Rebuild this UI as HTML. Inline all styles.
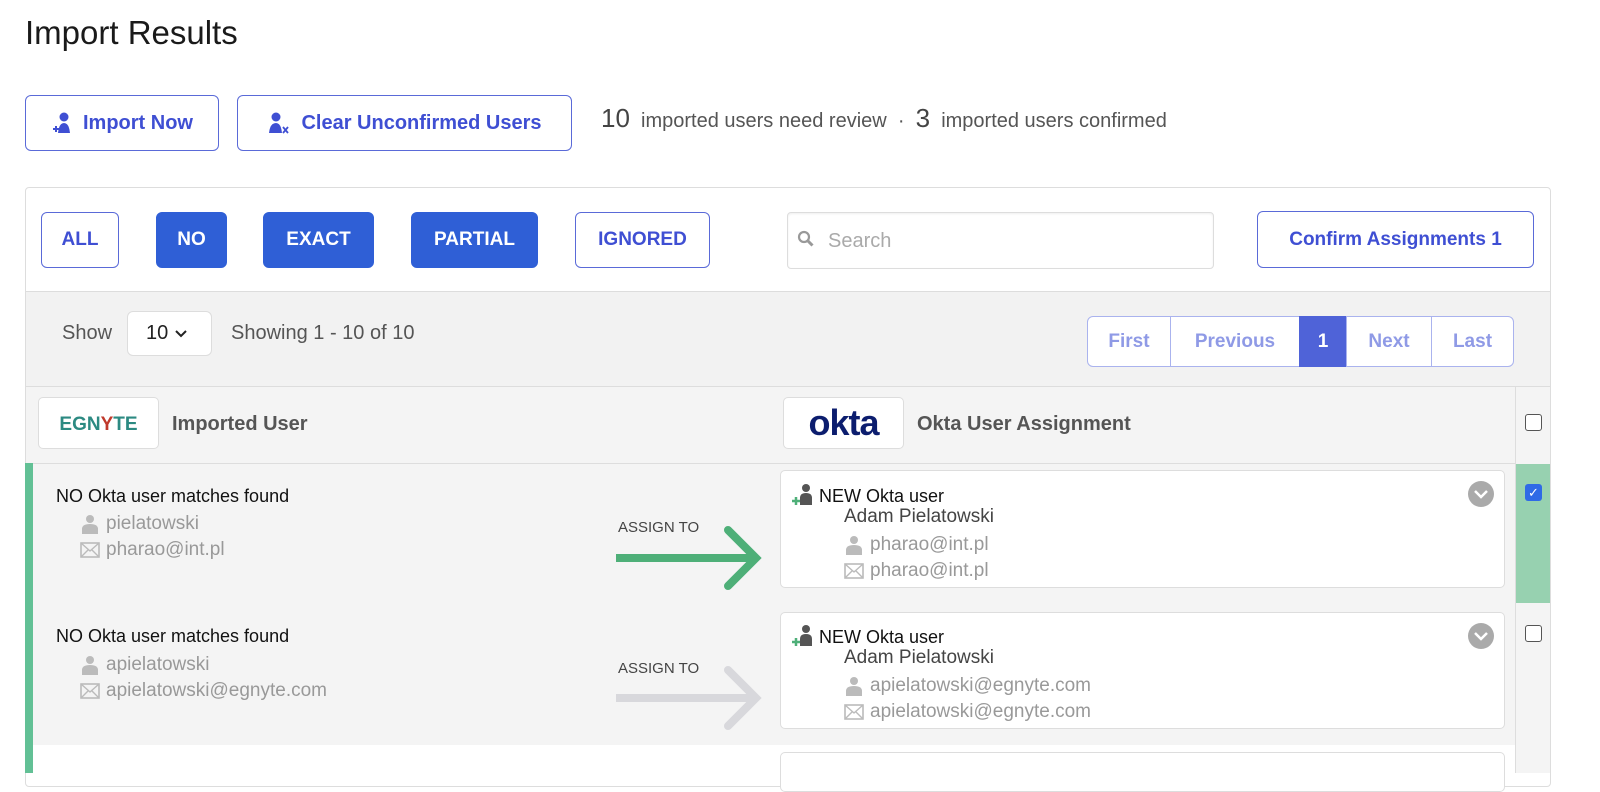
<!DOCTYPE html>
<html><head><style>
*{box-sizing:border-box;margin:0;padding:0}
body{width:1600px;height:773px;overflow:hidden;background:#fff;font-family:"Liberation Sans",sans-serif;position:relative;color:#222}
.a{position:absolute}
.btn{position:absolute;border:1px solid #5a6ad8;border-radius:6px;color:#3f4fd3;font-weight:bold;display:flex;align-items:center;justify-content:center;background:#fff}
.fb{font-size:19px}
.fill{background:#2f5fd6;border-color:#2f5fd6;color:#fff}
.g{color:#999;font-size:19px;display:flex;align-items:center;white-space:nowrap}
.g svg{margin-right:6px}
.pg{position:absolute;top:316px;height:51px;border:1px solid #aab3ee;color:#8f9ae6;font-weight:bold;font-size:19px;display:flex;align-items:center;justify-content:center;background:#fff}
.card{position:absolute;left:780px;width:725px;background:#fff;border:1px solid #ddd;border-radius:5px}
.chev{position:absolute;right:10px;top:10px;width:26px;height:26px;border-radius:50%;background:#aaa}
.cb{position:absolute;width:17px;height:17px;border:1px solid #555;border-radius:3px;background:#fff}
</style></head><body>
<svg width="0" height="0" style="position:absolute"><defs>
<symbol id="p" viewBox="0 0 20 20"><circle cx="10" cy="5" r="4" fill="#bbb"/><path d="M2 20V15Q2 10 10 10Q18 10 18 15V20Z" fill="#bbb"/></symbol>
<symbol id="m" viewBox="0 0 20 16"><rect x="1" y="1" width="18" height="14" fill="none" stroke="#bbb" stroke-width="1.6"/><path d="M1 1l9 8 9-8M1 15l7-7M19 15l-7-7" stroke="#bbb" stroke-width="1.4" fill="none"/></symbol>
</defs></svg>
<div class="a" style="left:25px;top:14px;font-size:33px;font-weight:500;color:#1a1a1a">Import Results</div>

<div class="btn" style="left:25px;top:95px;width:194px;height:56px;font-size:20px">
<svg width="22" height="24" viewBox="0 0 22 24" style="margin-right:10px"><circle cx="13" cy="6" r="4.5" fill="#3f4fd3"/><path d="M7 22 Q8 12 13 12 Q18 12 19 22Z" fill="#3f4fd3"/><path d="M2 18h6M5 15v6" stroke="#3f4fd3" stroke-width="2"/></svg>Import Now</div>
<div class="btn" style="left:237px;top:95px;width:335px;height:56px;font-size:20px">
<svg width="24" height="24" viewBox="0 0 24 24" style="margin-right:10px"><circle cx="9" cy="6" r="4.5" fill="#3f4fd3"/><path d="M2 22 Q3 12 9 12 Q14 12 15 22Z" fill="#3f4fd3"/><path d="M16 16l5 6M21 16l-5 6" stroke="#3f4fd3" stroke-width="1.8"/></svg>Clear Unconfirmed Users</div>
<div class="a" style="left:601px;top:103px;font-size:20px;color:#555"><span style="font-size:26px;color:#444">10</span>&nbsp; imported users need review &nbsp;·&nbsp; <span style="font-size:26px;color:#444">3</span>&nbsp; imported users confirmed</div>

<div class="a" style="left:25px;top:187px;width:1526px;height:600px;border:1px solid #ddd;border-radius:4px;background:#fff"></div>
<div class="btn fb" style="left:41px;top:212px;width:78px;height:56px">ALL</div>
<div class="btn fb fill" style="left:156px;top:212px;width:71px;height:56px">NO</div>
<div class="btn fb fill" style="left:263px;top:212px;width:111px;height:56px">EXACT</div>
<div class="btn fb fill" style="left:411px;top:212px;width:127px;height:56px">PARTIAL</div>
<div class="btn fb" style="left:575px;top:212px;width:135px;height:56px">IGNORED</div>
<div class="a" style="left:787px;top:212px;width:427px;height:57px;border:1px solid #ddd;border-radius:4px;box-shadow:inset 0 1px 2px #eee"></div>
<svg class="a" style="left:797px;top:230px" width="18" height="18" viewBox="0 0 18 18"><circle cx="7" cy="7" r="5" stroke="#999" stroke-width="2.2" fill="none"/><path d="M10.5 10.5l5 5" stroke="#999" stroke-width="3"/></svg>
<div class="a" style="left:828px;top:230px;color:#aaa;font-size:20px">Search</div>
<div class="btn fb" style="left:1257px;top:211px;width:277px;height:57px">Confirm Assignments 1</div>

<div class="a" style="left:26px;top:291px;width:1524px;height:95px;background:#f2f2f2;border-top:1px solid #ddd"></div>
<div class="a" style="left:62px;top:322px;font-size:20px;color:#555">Show</div>
<div class="a" style="left:127px;top:311px;width:85px;height:45px;background:#fff;border:1px solid #ddd;border-radius:6px;font-size:20px;padding:10px 0 0 18px;color:#222">10 <svg width="14" height="10" viewBox="0 0 14 10"><path d="M2 2l5 5 5-5" stroke="#222" stroke-width="2" fill="none"/></svg></div>
<div class="a" style="left:231px;top:322px;font-size:20px;color:#555">Showing 1 - 10 of 10</div>
<div class="pg" style="left:1087px;width:84px;border-radius:6px 0 0 6px">First</div>
<div class="pg" style="left:1170px;width:130px">Previous</div>
<div class="pg" style="left:1299px;width:48px;background:#4f63d8;border-color:#4f63d8;color:#fff">1</div>
<div class="pg" style="left:1346px;width:86px">Next</div>
<div class="pg" style="left:1431px;width:83px;border-radius:0 6px 6px 0">Last</div>

<div class="a" style="left:26px;top:386px;width:1524px;height:387px;background:#f4f4f4;border-top:1px solid #ddd"></div>
<div class="a" style="left:26px;top:463px;width:1490px;height:1px;background:#ddd"></div>
<div class="a" style="left:1515px;top:386px;width:1px;height:387px;background:#ddd"></div>
<div class="a" style="left:38px;top:397px;width:121px;height:52px;background:#fff;border:1px solid #ddd;border-radius:5px;font-size:19px;font-weight:bold;color:#2c8a82;text-align:center;padding-top:16px">EGN<span style="color:#c0392b">Y</span>TE</div>
<div class="a" style="left:172px;top:413px;font-size:20px;font-weight:bold;color:#555">Imported User</div>
<div class="a" style="left:783px;top:397px;width:121px;height:52px;background:#fff;border:1px solid #ddd;border-radius:5px;font-size:36px;font-weight:bold;color:#0c1d6e;text-align:center;padding-top:4px;letter-spacing:-1px">okta</div>
<div class="a" style="left:917px;top:413px;font-size:20px;font-weight:bold;color:#555">Okta User Assignment</div>
<div class="cb" style="left:1525px;top:414px"></div>

<div class="a" style="left:25px;top:463px;width:8px;height:310px;background:#62c095"></div>
<div class="a" style="left:1516px;top:464px;width:34px;height:139px;background:#97d1b0"></div>
<div class="a" style="left:1525px;top:484px;width:17px;height:17px;border-radius:3px;background:#2f6ae6;color:#fff;font-size:13px;text-align:center;line-height:17px">✓</div>
<div class="cb" style="left:1525px;top:625px"></div>
<div class="a" style="left:33px;top:745px;width:1482px;height:28px;background:#fff"></div>

<!-- row 1 -->
<div class="a" style="left:56px;top:486px;font-size:18px;color:#111">NO Okta user matches found</div>
<div class="a g" style="left:80px;top:513px"><svg width="20" height="20"><use href="#p"/></svg>pielatowski</div>
<div class="a g" style="left:80px;top:539px"><svg width="20" height="16"><use href="#m"/></svg>pharao@int.pl</div>
<div class="a" style="left:618px;top:519px;font-size:15px;color:#444">ASSIGN TO</div>
<svg class="a" style="left:616px;top:525px" width="150" height="70" viewBox="0 0 150 70"><path d="M0 33H140M112 5l28 28-28 28" stroke="#4eaf78" stroke-width="8" fill="none" stroke-linecap="round"/></svg>
<div class="card" style="top:470px;height:118px">
<div class="chev"><svg width="26" height="26" viewBox="0 0 26 26"><path d="M7 10l6 6 6-6" stroke="#fff" stroke-width="2.5" fill="none"/></svg></div>
<svg class="a" style="left:10px;top:12px" width="26" height="24" viewBox="0 0 26 24"><circle cx="15" cy="5" r="4" fill="#555"/><path d="M9 22V15Q9 10 15 10Q21 10 21 15V22Z" fill="#555"/><path d="M1 18h8M5 14v8" stroke="#4eaf78" stroke-width="2.5"/></svg>
<div class="a" style="left:38px;top:15px;font-size:18px;color:#111">NEW Okta user</div>
<div class="a" style="left:63px;top:35px;font-size:19px;color:#444">Adam Pielatowski</div>
<div class="a g" style="left:63px;top:63px"><svg width="20" height="20"><use href="#p"/></svg>pharao@int.pl</div>
<div class="a g" style="left:63px;top:89px"><svg width="20" height="16"><use href="#m"/></svg>pharao@int.pl</div>
</div>

<!-- row 2 -->
<div class="a" style="left:56px;top:626px;font-size:18px;color:#111">NO Okta user matches found</div>
<div class="a g" style="left:80px;top:654px"><svg width="20" height="20"><use href="#p"/></svg>apielatowski</div>
<div class="a g" style="left:80px;top:680px"><svg width="20" height="16"><use href="#m"/></svg>apielatowski@egnyte.com</div>
<div class="a" style="left:618px;top:660px;font-size:15px;color:#444">ASSIGN TO</div>
<svg class="a" style="left:616px;top:665px" width="150" height="70" viewBox="0 0 150 70"><path d="M0 33H140M112 5l28 28-28 28" stroke="#d8d8dc" stroke-width="8" fill="none" stroke-linecap="round"/></svg>
<div class="card" style="top:612px;height:117px">
<div class="chev"><svg width="26" height="26" viewBox="0 0 26 26"><path d="M7 10l6 6 6-6" stroke="#fff" stroke-width="2.5" fill="none"/></svg></div>
<svg class="a" style="left:10px;top:11px" width="26" height="24" viewBox="0 0 26 24"><circle cx="15" cy="5" r="4" fill="#555"/><path d="M9 22V15Q9 10 15 10Q21 10 21 15V22Z" fill="#555"/><path d="M1 18h8M5 14v8" stroke="#4eaf78" stroke-width="2.5"/></svg>
<div class="a" style="left:38px;top:14px;font-size:18px;color:#111">NEW Okta user</div>
<div class="a" style="left:63px;top:34px;font-size:19px;color:#444">Adam Pielatowski</div>
<div class="a g" style="left:63px;top:62px"><svg width="20" height="20"><use href="#p"/></svg>apielatowski@egnyte.com</div>
<div class="a g" style="left:63px;top:88px"><svg width="20" height="16"><use href="#m"/></svg>apielatowski@egnyte.com</div>
</div>
<div class="card" style="top:752px;height:40px"></div>
</body></html>
